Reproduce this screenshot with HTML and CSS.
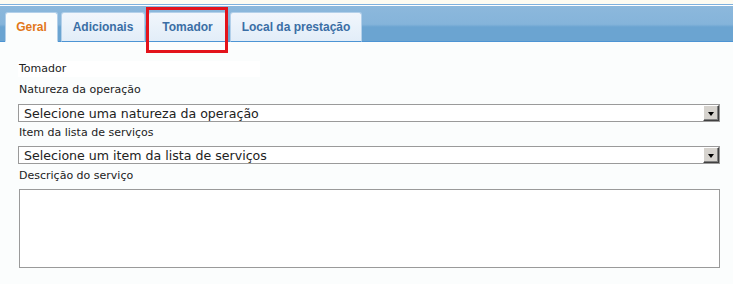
FILE: index.html
```html
<!DOCTYPE html>
<html lang="pt">
<head>
  <meta charset="UTF-8">
  <title>Nota fiscal - Serviço</title>
  <link rel="stylesheet" href="styles.css">
</head>
<body>
  <div class="topline"></div>
  <!-- Abas -->
  <div class="tabbar">
    <a class="tab active tab-geral">Geral</a>
    <a class="tab tab-adicionais">Adicionais</a>
    <a class="tab marked tab-tomador">Tomador</a>
    <a class="tab tab-local">Local da prestação</a>
  </div>

  <main class="panel">
    <div class="field">
      <span class="label boxed">Tomador</span>
    </div>
    <div class="field">
      <label class="label first">Natureza da operação</label>
      <div class="select">
        <span>Selecione uma natureza da operação</span>
        <span class="arrow"></span>
      </div>
    </div>
    <div class="field">
      <label class="label">Item da lista de serviços</label>
      <div class="select last">
        <span>Selecione um item da lista de serviços</span>
        <span class="arrow"></span>
      </div>
    </div>
    <div class="field">
      <label class="label">Descrição do serviço</label>
      <div class="textarea"></div>
    </div>
  </main>
</body>
</html>
```

FILE: styles.css
```css
:root {
  --blue-top: #8cb8dc;
  --blue-bottom: #6ba4d1;
  --blue-line: #4c94d4;
  --tab-bg: #e2edf8;
  --tab-text: #3a6ea5;
  --orange: #e2771a;
  --border: #9a9a9a;
}

* { margin: 0; padding: 0; box-sizing: border-box; }
body {
  background: #fbfdfd;
  font-family: Tahoma, "DejaVu Sans", sans-serif;
  color: #222;
}

/* Barra superior */
.topline {
  height: 5px;
  background: #fdfbf1;
  border-bottom: 1px solid #7fb1de;
}
.tabbar {
  display: flex;
  align-items: flex-end;
  gap: 3px;
  height: 37px;
  padding-left: 5px;
  border-top: 1px solid #fff;
  background: linear-gradient(180deg, var(--blue-top) 0%, #85b4da 52%, var(--blue-bottom) 60%, var(--blue-bottom) 100%);
  border-bottom: 1px solid var(--blue-line);
}
.tab {
  position: relative;
  height: 30px;
  margin-bottom: -1px;
  display: flex;
  align-items: center;
  justify-content: center;
  font: bold 12px "Liberation Sans", Arial, sans-serif;
  color: var(--tab-text);
  background: linear-gradient(180deg, #f1f6fc, var(--tab-bg));
  border: 1px solid #b3d0ea;
  border-bottom: 1px solid var(--blue-line);
  border-radius: 3px 3px 0 0;
}
.tab-geral { width: 53px; }
.tab-adicionais { width: 84px; }
.tab-tomador { width: 79px; }
.tab-local { width: 132px; }
.tab.active {
  color: var(--orange);
  background: #fbfdfd;
  border-bottom-color: #fbfdfd;
}
.tab.marked::after {
  content: '';
  position: absolute;
  left: -3px;
  right: -2px;
  top: -6px;
  bottom: -12px;
  border: 3px solid #e3131b;
}

/* Formulário */
.panel {
  padding: 19px 13px 0 18px;
}
.field { display: flex; flex-direction: column; }
.label {
  font-size: 11px;
  line-height: 16px;
  padding-left: 1px;
  margin-bottom: 5px;
  color: #222;
}
.label.first { margin-bottom: 6px; }
.label.boxed {
  width: 242px;
  background: #fff;
}
.select {
  display: flex;
  align-items: center;
  justify-content: space-between;
  height: 18px;
  border: 1px solid var(--border);
  background: #fff;
  font-size: 12.6px;
  padding-left: 5px;
  margin-bottom: 3px;
}
.select.last { margin-bottom: 4px; }
.arrow {
  width: 16px;
  height: 16px;
  background: #d6d3ce;
  border: 1px solid;
  border-color: #fff #404040 #404040 #fff;
  box-shadow: inset -1px -1px 0 #808080;
  position: relative;
}
.arrow::after {
  content: '';
  position: absolute;
  left: 4px;
  top: 6px;
  border: 3px solid transparent;
  border-top: 4px solid #000;
  border-bottom: 0;
}
.textarea {
  height: 79px;
  border: 1px solid var(--border);
  background: #fff;
  margin-left: 1px;
}
```
